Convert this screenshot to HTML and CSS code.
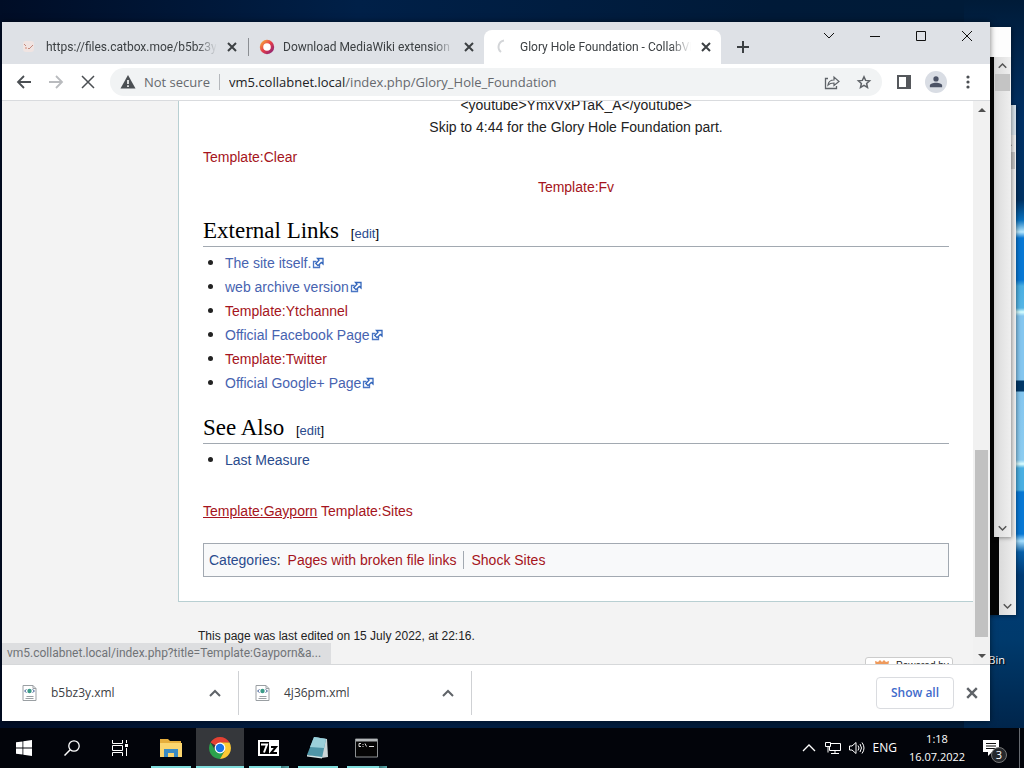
FILE: index.html
```html
<!DOCTYPE html>
<html lang="en">
<head>
<meta charset="utf-8">
<title>Desktop</title>
<link rel="stylesheet" href="styles.css">
</head>
<body>
<svg width="0" height="0" class="defs" aria-hidden="true">
  <symbol id="x" viewBox="0 0 10 10"><path d="M1 1l8 8M9 1l-8 8" fill="none" stroke="currentColor"/></symbol>
  <symbol id="up" viewBox="0 0 12 8"><path d="M1 7l5-5 5 5" fill="none" stroke="currentColor"/></symbol>
  <symbol id="down" viewBox="0 0 12 8"><path d="M1 1l5 5 5-5" fill="none" stroke="currentColor"/></symbol>
  <symbol id="ext" viewBox="0 0 12 12"><path d="M4.500 4.500H1.500v6h6v-3" fill="#fff" stroke="#4a76c4" stroke-width="1.300"/><path d="M5.500 1.500h5.500v5.500L9.300 5.500 6 8.700 3.800 6.500 7 3.200z" fill="#fff" stroke="#3366bb" stroke-width="1.300"/></symbol>
  <symbol id="xml" viewBox="0 0 14 16"><path d="M.5.500h10l3 3v12H.5z" fill="#fff" stroke="#9a9fa3"/><path d="M10.500.500v3h3" fill="none" stroke="#9a9fa3"/><circle cx="7" cy="6" r="2.200" fill="#3b9b87"/><path d="M4 4.500L2 6l2 1.500M10 4.500L12 6l-2 1.500" fill="none" stroke="#49659b"/><path d="M4 11.500h7M3 13.500h8" stroke="#9a9fa3"/></symbol>
</svg>
<main class="desktop">
  <div class="wallpaper"></div>
  <div class="bin">Recycle Bin</div>
  <div class="back-window back-two"><div class="back-title"></div><div class="back-body"><div class="back-scroll"><svg class="arrow"><use href="#up"/></svg><i></i><svg class="arrow last"><use href="#down"/></svg></div></div></div>
  <div class="back-window back-one"><div class="back-title"></div><div class="back-body"><div class="back-scroll"><svg class="arrow"><use href="#up"/></svg><i></i><svg class="arrow last"><use href="#down"/></svg></div></div></div>

  <section class="browser">
    <header class="tabstrip">
      <div class="tab">
        <svg class="favicon" viewBox="0 0 16 16"><rect x="1" y="2" width="11" height="11" rx="3" fill="#f0e4e2"/><path d="M2 5l2 2M6 9l1 1 4-4" stroke="#c3897d" fill="none"/><circle cx="4" cy="9" r="1" fill="#e1a898"/></svg>
        <span class="tab-title">https://files.catbox.moe/b5bz3y.xml</span>
        <button class="tab-close" aria-label="Close tab"><svg><use href="#x"/></svg></button>
      </div>
      <div class="tab divided">
        <svg class="favicon" viewBox="0 0 16 16"><defs><linearGradient id="ring" x2="1" y2="1"><stop stop-color="#f7a03c"/><stop offset=".5" stop-color="#e23b4b"/><stop offset="1" stop-color="#8f2472"/></linearGradient></defs><circle cx="8" cy="8" r="5.500" fill="#fff" stroke="url(#ring)" stroke-width="3.400"/></svg>
        <span class="tab-title">Download MediaWiki extension</span>
        <button class="tab-close" aria-label="Close tab"><svg><use href="#x"/></svg></button>
      </div>
      <div class="tab active">
        <svg class="favicon" viewBox="0 0 16 16"><path d="M8 1.500A6.500 6.500 0 0 0 5 13" fill="none" stroke="#d3d5d8" stroke-width="2"/></svg>
        <span class="tab-title">Glory Hole Foundation - CollabVM</span>
        <button class="tab-close" aria-label="Close tab"><svg><use href="#x"/></svg></button>
      </div>
      <button class="new-tab" aria-label="New tab"><svg viewBox="0 0 12 12"><path d="M6 0v12M0 6h12" stroke="#3c4043" stroke-width="2"/></svg></button>
      <div class="captions">
        <button aria-label="Search tabs"><svg viewBox="0 0 12 12"><path d="M1 3l5 5 5-5" fill="none" stroke="#111"/></svg></button>
        <button aria-label="Minimize"><svg viewBox="0 0 12 12"><path d="M1 6.500h10" stroke="#111"/></svg></button>
        <button aria-label="Maximize"><svg viewBox="0 0 12 12"><path d="M1.500 1.500h9v9h-9z" fill="none" stroke="#111"/></svg></button>
        <button aria-label="Close"><svg viewBox="0 0 12 12"><path d="M1 1l10 10M11 1L1 11" stroke="#111"/></svg></button>
      </div>
    </header>

    <nav class="toolbar">
      <button aria-label="Back"><svg viewBox="0 0 16 16"><path d="M15 8H2M8 2L2 8l6 6" fill="none" stroke="#4b4f53" stroke-width="1.800"/></svg></button>
      <button aria-label="Forward"><svg viewBox="0 0 16 16"><path d="M1 8h13M8 2l6 6-6 6" fill="none" stroke="#b9bbbe" stroke-width="1.800"/></svg></button>
      <button aria-label="Stop"><svg viewBox="0 0 16 16"><path d="M2 2l12 12M14 2L2 14" stroke="#4b4f53" stroke-width="1.500"/></svg></button>
      <div class="omnibox">
        <svg class="warn" viewBox="0 0 16 16"><path d="M8 1l7.500 13.500H.5z" fill="#4b4f53"/><path d="M8 6v4M8 11.200V13" stroke="#fff" stroke-width="1.600"/></svg>
        <span class="insecure">Not secure</span>
        <span class="url"><b>vm5.collabnet.local</b>/index.php/Glory_Hole_Foundation</span>
        <button aria-label="Share"><svg viewBox="0 0 16 16"><path d="M4 4.500H1.500v10h11V12" fill="none" stroke="#5f6368" stroke-width="1.300"/><path d="M4 11c.5-3.500 2.500-5 6-5V3l5 4.500-5 4V9C7.500 9 5.500 9.500 4 11z" fill="none" stroke="#5f6368" stroke-width="1.200"/></svg></button>
        <button aria-label="Bookmark"><svg viewBox="0 0 16 16"><path d="M8 2.800l1.600 3.600 4 .4-3 2.700.9 4L8 11.400l-3.500 2.100.9-4-3-2.700 4-.4z" fill="none" stroke="#5f6368" stroke-width="1.500"/></svg></button>
      </div>
      <button class="side" aria-label="Side panel"><svg viewBox="0 0 16 16"><path d="M2 2h12v12H2z" fill="#fff" stroke="#55585c" stroke-width="2"/><path d="M10 1h5v14h-5z" fill="#55585c"/></svg></button>
      <button class="profile" aria-label="Profile"><svg viewBox="0 0 16 16"><circle cx="8" cy="4.500" r="3" fill="#4c5366"/><path d="M1 14v-2c0-2 3.500-3.200 7-3.200s7 1.200 7 3.200v2z" fill="#4c5366"/></svg></button>
      <button aria-label="Menu"><svg viewBox="0 0 16 16"><g fill="#4b4f53"><circle cx="8" cy="3" r="1.600"/><circle cx="8" cy="8" r="1.600"/><circle cx="8" cy="13" r="1.600"/></g></svg></button>
    </nav>

    <div class="viewport">
      <div class="page">
        <article class="content">
          <p class="center">&lt;youtube&gt;YmxVxPTaK_A&lt;/youtube&gt;<br>Skip to 4:44 for the Glory Hole Foundation part.</p>
          <p><a class="new" href="#">Template:Clear</a></p>
          <p class="center"><a class="new" href="#">Template:Fv</a></p>
          <h2>External Links <span class="edit">[<a href="#">edit</a>]</span></h2>
          <ul>
            <li><a class="external" href="#">The site itself.<svg><use href="#ext"/></svg></a></li>
            <li><a class="external" href="#">web archive version<svg><use href="#ext"/></svg></a></li>
            <li><a class="new" href="#">Template:Ytchannel</a></li>
            <li><a class="external" href="#">Official Facebook Page<svg><use href="#ext"/></svg></a></li>
            <li><a class="new" href="#">Template:Twitter</a></li>
            <li><a class="external" href="#">Official Google+ Page<svg><use href="#ext"/></svg></a></li>
          </ul>
          <h2>See Also <span class="edit">[<a href="#">edit</a>]</span></h2>
          <ul><li><a href="#">Last Measure</a></li></ul>
          <p class="templates"><a class="new hovered" href="#">Template:Gayporn</a> <a class="new" href="#">Template:Sites</a></p>
          <div class="categories"><a href="#">Categories</a>:
            <ul><li><a class="new" href="#">Pages with broken file links</a></li><li><a class="new" href="#">Shock Sites</a></li></ul>
          </div>
        </article>
        <footer class="page-footer">
          <p>This page was last edited on 15 July 2022, at 22:16.</p>
          <div class="powered"><svg viewBox="0 0 16 16"><path d="M1 1l3 1 2-2 2 2 2-2 2 2 3-1-2 13H3z" fill="#ee9a5c"/></svg>Powered by</div>
        </footer>
      </div>
      <div class="scrollbar"><svg viewBox="0 0 8 4"><path d="M0 4l4-4 4 4z" fill="#4f4f4f"/></svg><div class="track"><div class="thumb"></div></div><svg viewBox="0 0 8 4"><path d="M0 0l4 4 4-4z" fill="#4f4f4f"/></svg></div>
      <div class="status">vm5.collabnet.local/index.php?title=Template:Gayporn&amp;a...</div>
    </div>

    <footer class="shelf">
      <div class="download"><svg class="file"><use href="#xml"/></svg><span>b5bz3y.xml</span><button aria-label="Options"><svg><use href="#up"/></svg></button></div>
      <div class="download"><svg class="file"><use href="#xml"/></svg><span>4j36pm.xml</span><button aria-label="Options"><svg><use href="#up"/></svg></button></div>
      <button class="show-all">Show all</button>
      <button class="shelf-close" aria-label="Close"><svg><use href="#x"/></svg></button>
    </footer>
  </section>
</main>

<footer class="taskbar">
  <button aria-label="Start"><svg viewBox="0 0 16 16"><path d="M0 2.300L6.500 1.400v6.200H0zM7.300 1.300L16 0v7.600H7.300zM0 8.400h6.500v6.200L0 13.700zM7.300 8.400H16V16l-8.700-1.300z" fill="#fff"/></svg></button>
  <button aria-label="Search"><svg viewBox="0 0 16 16"><circle cx="10" cy="6" r="5.200" fill="none" stroke="#fff" stroke-width="1.300"/><path d="M6.200 9.800L.5 15.500" stroke="#fff" stroke-width="1.500"/></svg></button>
  <button aria-label="Task view"><svg viewBox="0 0 16 16"><path d="M.5 0v3.500h10V0M.5 16v-3.500h10V16M.5 5.500h10v5H.5zM14.500 0v3M14.500 8v8" fill="none" stroke="#fff"/><path d="M13 4h3v3h-3z" fill="#fff"/></svg></button>
  <div class="apps">
    <button class="app" aria-label="File Explorer"><svg viewBox="0 0 24 24"><path d="M1 3h8l2 2h11v16H1z" fill="#e6ae3d"/><path d="M1 7h22v14H1z" fill="#fbd56f"/><path d="M5 13h14v8h-4v-4H9v4H5z" fill="#3b8bc4"/></svg></button>
    <button class="app current" aria-label="Chrome"><svg viewBox="0 0 24 24"><path d="M12 12L2.500 6.500A11 11 0 0 1 21.500 6.500L12 7z" fill="#e34133"/><path d="M2.500 6.500A11 11 0 0 0 12 23l4.500-8L12 12 7 14z" fill="#2ba24c"/><path d="M21.500 6.500H12l4.500 8.500L12 23A11 11 0 0 0 21.500 6.500z" fill="#fcc934"/><circle cx="12" cy="12" r="5.400" fill="#fff"/><circle cx="12" cy="12" r="4.200" fill="#1a73e8"/></svg></button>
    <button class="app stacked" aria-label="7-Zip"><svg viewBox="0 0 24 24"><path d="M1 4h21v16H1z" fill="#fff"/><path d="M3 6h9v12H3z" fill="#000"/><path d="M4 8.500h6L7 16.500" fill="none" stroke="#fff" stroke-width="2"/><path d="M14 11h5l-5 6h6" fill="none" stroke="#000" stroke-width="2"/></svg></button>
    <button class="app" aria-label="Notepad"><svg viewBox="0 0 24 24"><path d="M8 1l13 2 1 18-7 1z" fill="#cbd6d8"/><path d="M8 1l12 2-4 19L1 19z" fill="#4f96a8"/><path d="M8 1l12 2-2 9L4 11z" fill="#9bd0da"/><path d="M1 19l15 2v1.500L1 20.500z" fill="#d7e8e9"/></svg></button>
    <button class="app stacked" aria-label="Command Prompt"><svg viewBox="0 0 24 24"><path d="M.5 3h22v18H.5z" fill="#050505" stroke="#8c9092"/><path d="M1 3h21v2.500H1z" fill="#b3b7b9"/><path d="M6 7.500H4v3h2M8 8v1M8 10v1M10 7.500l1.500 3M14 10.500h5" fill="none" stroke="#ddd"/></svg></button>
  </div>
  <div class="tray">
    <svg viewBox="0 0 16 16"><path d="M2 11l6-6 6 6" fill="none" stroke="#fff" stroke-width="1.300"/></svg>
    <svg viewBox="0 0 16 16"><path d="M6 3.500h9.500v7H4.500V7M10 10.500v3M6 13.500h8M.5 2.500h5v4h-5zM3 6.500v6" fill="none" stroke="#fff"/></svg>
    <svg viewBox="0 0 16 16"><path d="M.5 6v4H3l4 3.500v-11L3 6zM9 5.500q2 2.500 0 5M11 4q3 4 0 8M13 2.500q4 5.500 0 11" fill="none" stroke="#fff"/></svg>
    <span>ENG</span>
    <div class="clock">1:18<br>16.07.2022</div>
    <button class="notifications" aria-label="Notifications"><svg viewBox="0 0 16 16"><path d="M0 0h16v12H9l-4 4v-4H0z" fill="#fff"/><path d="M3 3.500h10M3 6h10M3 8.500h10" stroke="#111"/></svg><span>3</span></button>
  </div>
</footer>
</body>
</html>
```
FILE: styles.css
```css
* { box-sizing: border-box; }
body { margin: 0; height: 100vh; display: flex; flex-direction: column; overflow: hidden; background: #02050b; font: 12px/16px "Open Sans", sans-serif; color: #3c4043; }
button { border: 0; padding: 0; margin: 0; background: none; font: inherit; color: inherit; display: flex; align-items: center; justify-content: center; }
svg { display: block; flex: none; width: 16px; height: 16px; }
a { color: #2a4b8d; text-decoration: none; }
p, ul, h2 { margin: 0; padding: 0; }
.defs { position: absolute; width: 0; height: 0; }

/* Desktop */
.desktop { position: relative; flex: 1; min-height: 0; overflow: hidden; background: linear-gradient(90deg, #000d26, #002048 35%, #001a38 75%, #001b38 94%); }
.wallpaper { position: absolute; right: 0; top: 0; bottom: 0; width: 60px; background: linear-gradient(#001b38 0, #003064 120px, #003263 200px, #0870bd 220px, #b9e9ff 232px, #0878d4 238px, #0878d4 280px, #4aafe2 286px, #55b5e5 308px, #d8ffff 312px, #84c6ef 316px, #84c6ef 380px, #003868 381px, #003868 391px, #84c6ef 392px, #8cccf0 460px, #dfffff 464px, #4aafe2 468px, #4aafe2 490px, #0878d4 492px, #0878d4 534px, #a8e0ff 541px, #075fa9 552px, #003c76 575px, #003a6c 640px, #00254b 728px); }
.bin { position: absolute; right: 19px; top: 652px; color: #fff; font-size: 11px; text-shadow: 1px 1px 1px #000; }
.back-window { position: absolute; width: 500px; height: 510px; display: flex; flex-direction: column; background: #050505; box-shadow: 1px 1px 4px #0006; }
.back-one { right: 13px; top: 27px; }
.back-two { right: 8px; top: 105px; }
.back-title { height: 30px; background: #fdfdfd; }
.back-two .back-title { background: #d6e0e8; }
.back-body { flex: 1; display: flex; justify-content: flex-end; }
.back-scroll { width: 17px; display: flex; flex-direction: column; align-items: center; background: linear-gradient(90deg, #dadada, #efefef); }
.back-scroll i { width: 15px; height: 17px; background: #c4c4c4; }
.arrow { width: 9px; height: 17px; stroke-width: 2; color: #555; }
.arrow.last { margin-top: auto; }

/* Browser window */
.browser { position: absolute; top: 22px; left: 2px; right: 34px; bottom: 7px; display: flex; flex-direction: column; background: #fff; box-shadow: 0 0 6px #0008; }
.tabstrip { flex: none; height: 42px; display: flex; padding: 8px 0 0 8px; background: #dee1e6; color: #3c4043; }
.tab { flex: 0 1 237px; min-width: 0; height: 34px; display: flex; align-items: center; gap: 8px; padding: 0 8px 0 12px; }
.tab.active { background: #fff; border-radius: 8px 8px 0 0; }
.tab.divided { background: linear-gradient(#8b8e93, #8b8e93) 1px 50% / 1px 18px no-repeat; }
.tab-title { flex: 1; min-width: 0; overflow: hidden; white-space: nowrap; font-family: Roboto, sans-serif; -webkit-mask-image: linear-gradient(90deg, #000 88%, transparent); mask-image: linear-gradient(90deg, #000 88%, transparent); }
.tab-close { width: 14px; height: 16px; }
.tab-close svg { width: 10px; height: 10px; stroke-width: 2; }
.new-tab { width: 28px; height: 34px; margin-left: 8px; }
.new-tab svg { width: 12px; height: 12px; }
.captions { display: flex; margin-left: auto; }
.captions button { width: 46px; height: 12px; }
.captions svg { width: 12px; height: 12px; }
.toolbar { flex: none; height: 37px; display: flex; align-items: center; padding: 0 6px; border-bottom: 1px solid #d9dbde; background: #fff; }
.toolbar button { width: 32px; height: 28px; }
.omnibox { flex: 1; min-width: 0; height: 28px; display: flex; align-items: center; margin: 0 6px 0 6px; padding: 0 2px 0 10px; border-radius: 14px; background: #f1f3f4; font-size: 13px; color: #66696e; }
.insecure { width: 76px; margin: 0 9px 0 8px; white-space: nowrap; border-right: 1px solid #b5b8bc; }
.url { flex: 1; overflow: hidden; white-space: nowrap; }
.url b { font-weight: 400; color: #202124; }
.toolbar .profile { width: 22px; height: 22px; margin: 0 5px; border-radius: 50%; background: #d9dde4; }
.profile svg { width: 14px; height: 14px; }

/* Wiki page */
.viewport { position: relative; flex: 1; min-height: 0; display: flex; overflow: hidden; }
.page { flex: 1; min-width: 0; background: #f3f3f3; font: 14px/22px "Liberation Sans", Arial, sans-serif; color: #222; }
.content { margin: -7px 0 0 176px; padding: 0 24px 24px; background: #fff; border: 1px solid #b8cfd2; border-width: 0 0 1px 1px; }
.content p { margin-bottom: 8px; }
.content .center { text-align: center; }
.content .new { color: #a51420; }
.content .external { color: #4763b0; }
.content .external svg { display: inline-block; width: 12px; height: 12px; margin-left: 1px; vertical-align: -1px; }
.content h2 { margin-top: 19px; padding-bottom: 1px; border-bottom: 1px solid #a2a9b1; font: 400 23px/28px "Liberation Serif", Georgia, serif; color: #000; }
.edit { margin-left: 6px; font: 13px/20px "Liberation Sans", Arial, sans-serif; }
.content > ul { margin-top: 4px; padding-left: 22px; }
.content > ul > li { line-height: 24px; }
.content > ul > li::marker { font-size: 17px; }
.content .templates { margin: 28px 0 21px; }
.content .hovered { text-decoration: underline; }
.categories { display: flex; flex-wrap: wrap; padding: 5px; border: 1px solid #a2a9b1; background: #f8f9fa; }
.categories ul { display: flex; list-style: none; }
.categories li { line-height: 18px; margin: 2px 0; padding: 0 7px; }
.categories li + li { border-left: 1px solid #a2a9b1; }
.page-footer { padding: 23px 20px 0 196px; font-size: 12px; }
.powered { width: 88px; height: 31px; margin: 10px 0 0 auto; padding: 2px 8px; display: flex; gap: 6px; border: 1px solid #ccc; border-radius: 3px; background: #fff; font-size: 10px; line-height: 12px; white-space: nowrap; }
.scrollbar { width: 17px; display: flex; flex-direction: column; align-items: center; gap: 6px; padding: 7px 0 6px; background: #f1f1f1; }
.scrollbar svg { width: 8px; height: 4px; }
.track { flex: 1; width: 13px; display: flex; flex-direction: column; justify-content: flex-end; padding-bottom: 11px; }
.thumb { height: 36%; background: #c1c1c1; }
.status { position: absolute; left: 0; bottom: 0; height: 21px; padding: 2px 10px 3px 5px; background: #dddee0; color: #707377; font-family: Roboto, sans-serif; }

/* Download shelf */
.shelf { flex: none; height: 57px; display: flex; align-items: center; padding: 0 8px 0 4px; border-top: 1px solid #d6d8da; background: #fff; }
.download { flex: 0 1 233px; height: 44px; display: flex; align-items: center; padding: 0 17px 0 16px; border-right: 1px solid #cfd1d4; }
.download .file { width: 15px; height: 16px; }
.download span { flex: 1; margin-left: 14px; }
.download button svg { width: 12px; height: 8px; stroke-width: 2; color: #5f6368; }
.show-all { width: 78px; height: 32px; margin: 0 8px 0 auto; border: 1px solid #dadce0; border-radius: 4px; color: #3f6bcb; font-weight: 600; }
.shelf-close { width: 20px; height: 20px; }
.shelf-close svg { width: 12px; height: 12px; stroke-width: 2; color: #5f6368; }

/* Taskbar */
.taskbar { flex: none; height: 40px; display: flex; background: #02040a; color: #fff; }
.taskbar > button { width: 48px; }
.apps { display: flex; gap: 1px; margin-left: 3px; }
.app { width: 48px; background: linear-gradient(#7fdcdc, #7fdcdc) 50% 100% / 40px 2px no-repeat; }
.app svg { width: 24px; height: 24px; }
.app.current { background: linear-gradient(#7fdcdc, #7fdcdc) 0 100% / 100% 2px no-repeat #35373b; }
.app.stacked { background: linear-gradient(90deg, #7fdcdc 32px, #39777a 32px, #5aa8aa) 50% 100% / 40px 2px no-repeat; }
.tray { margin-left: auto; display: flex; align-items: center; gap: 8px; padding-right: 4px; }
.clock { width: 64px; margin: 0 6px 0 0; text-align: center; font-size: 11px; line-height: 18px; }
.notifications { position: relative; width: 37px; height: 40px; border-right: 1px solid #666a70; justify-content: flex-start; }
.notifications span { position: absolute; left: 8px; top: 19px; width: 16px; height: 16px; border: 1px solid #777; border-radius: 50%; background: #25282c; font-size: 11px; line-height: 14px; }
```
